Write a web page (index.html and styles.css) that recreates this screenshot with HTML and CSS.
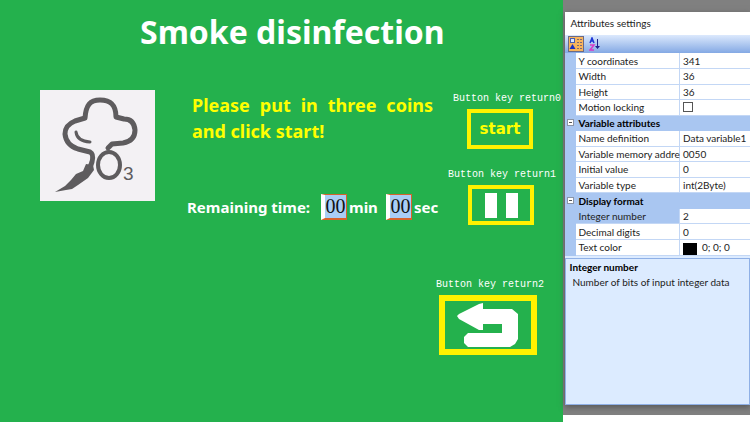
FILE: index.html
```
<!DOCTYPE html>
<html lang="en">
<head>
<meta charset="utf-8">
<title>Smoke disinfection</title>
<link rel="stylesheet" href="styles.css">
</head>
<body>
  <main class="screen">
    <h1>Smoke disinfection</h1>
    <div class="content">
      <svg class="logo" viewBox="0 0 115 111">
        <g fill="none" stroke="#5e5c5e" stroke-linecap="round" stroke-linejoin="round">
          <path stroke-width="5" d="M68 58L72 54L83 53Q95 51 95 40Q94 29 84 29L76 27C76 14 70 10 60 10C50 10 46 15 45 28L35 31Q25 35 25 44Q26 55 38 59L50 62Q54 64 52 72L49 80"/>
          <path stroke-width="3" d="M36 42Q37 51 50 52"/>
          <ellipse cx="69" cy="75" rx="11" ry="13" stroke-width="4"/>
        </g>
        <path fill="#5e5c5e" d="M46 74L53 75L54 80L48 88L38 95L32 99L26 100L15 102L25 96L31 90L36 84L43 81Z"/>
        <text class="logo-digit" x="83" y="90">3</text>
      </svg>
      <div class="messages">
        <p class="hint">Please put in three coins and click start!</p>
        <div class="timer">
          <span>Remaining time:</span>
          <input class="digits" id="minutes" type="text" value="00" readonly>
          <label for="minutes">min</label>
          <input class="digits" id="seconds" type="text" value="00" readonly>
          <label for="seconds">sec</label>
        </div>
      </div>
      <div class="keys">
        <div class="key key-start">
          <span class="key-name" id="key0">Button key return0</span>
          <button type="button" aria-describedby="key0">start</button>
        </div>
        <div class="key key-pause">
          <span class="key-name" id="key1">Button key return1</span>
          <button type="button" aria-label="Pause" aria-describedby="key1">
            <svg width="33" height="25" viewBox="0 0 33 25"><path fill="#fff" d="M0 0H12V25H0ZM21 0H33V25H21Z"/></svg>
          </button>
        </div>
        <div class="key key-back">
          <span class="key-name" id="key2">Button key return2</span>
          <button type="button" aria-label="Back" aria-describedby="key2">
            <svg width="62" height="44" viewBox="0 0 62 44"><path fill="#fff" d="M0 13L2 11L22 1L26 0L26 6L55 6L61 11L61 36L58 41L53 44L11 44L7 40L7 34L11 30L45 30L45 21L26 21L26 27L22 27L2 16Z"/></svg>
          </button>
        </div>
      </div>
    </div>
  </main>

  <aside class="dock">
    <section class="panel">
      <h2>Attributes settings</h2>
      <div class="toolbar">
        <button type="button" class="tool active" aria-label="Categorized">
          <svg width="14" height="14" viewBox="0 0 14 14">
            <rect x="1.500" y="1.500" width="4" height="4" fill="#dfe6fa" stroke="#4a5fb0"/>
            <path fill="#1c2fc0" d="M3.500 7L6.500 12H.5Z"/>
            <path stroke="#7d6a78" stroke-dasharray="2 1" d="M8 2.500H13M8 5.500H13M8 8.500H13M8 11.500H13"/>
          </svg>
        </button>
        <button type="button" class="tool" aria-label="Alphabetical">
          <svg width="12" height="14" viewBox="0 0 12 14">
            <path fill="none" stroke="#1f36d8" stroke-width="1.500" d="M1 6L3 1L5 6M2 4H4"/>
            <path fill="none" stroke="#d63cc8" stroke-width="1.500" d="M1 8H5L1 13H5"/>
            <path fill="#20208c" d="M8 2H9V9H11L8.500 12L6 9H8Z"/>
          </svg>
        </button>
      </div>
      <table>
        <tbody>
          <tr><td class="gutter"></td><th scope="row">Y coordinates</th><td>341</td></tr>
          <tr><td class="gutter"></td><th scope="row">Width</th><td>36</td></tr>
          <tr><td class="gutter"></td><th scope="row">Height</th><td>36</td></tr>
          <tr><td class="gutter"></td><th scope="row"><label for="lock">Motion locking</label></th><td><input id="lock" type="checkbox"></td></tr>
          <tr class="group"><td class="gutter"><button type="button" class="fold" aria-label="Collapse"></button></td><th colspan="2">Variable attributes</th></tr>
          <tr><td class="gutter"></td><th scope="row">Name definition</th><td>Data variable1</td></tr>
          <tr><td class="gutter"></td><th scope="row">Variable memory addre</th><td>0050</td></tr>
          <tr><td class="gutter"></td><th scope="row">Initial value</th><td>0</td></tr>
          <tr><td class="gutter"></td><th scope="row">Variable type</th><td>int(2Byte)</td></tr>
          <tr class="group"><td class="gutter"><button type="button" class="fold" aria-label="Collapse"></button></td><th colspan="2">Display format</th></tr>
          <tr class="selected"><td class="gutter"></td><th scope="row">Integer number</th><td>2</td></tr>
          <tr><td class="gutter"></td><th scope="row">Decimal digits</th><td>0</td></tr>
          <tr><td class="gutter"></td><th scope="row">Text color</th><td><span class="swatch"></span>0; 0; 0</td></tr>
        </tbody>
      </table>
      <div class="help">
        <h3>Integer number</h3>
        <p>Number of bits of input integer data</p>
      </div>
    </section>
  </aside>
</body>
</html>
```
FILE: styles.css
```
* {
  box-sizing: border-box;
}

body {
  margin: 0;
  min-height: 100vh;
  display: grid;
  grid-template-columns: 3fr 1fr;
  background: #fff;
  font-family: "Noto Sans", sans-serif;
}

h1, h2, h3, p {
  margin: 0;
}

button {
  padding: 0;
  font-family: inherit;
  cursor: pointer;
}

svg {
  display: block;
}

/* touch screen */
.screen {
  margin-bottom: 2px;
  padding: 8px 0 0 40px;
  background: #24b14d;
  color: #fff;
}

h1 {
  margin-left: 100px;
  font-size: 32px;
  line-height: 48px;
  white-space: nowrap;
}

.content {
  display: flex;
  align-items: flex-start;
  padding-top: 34px;
}

.logo {
  flex: none;
  width: 115px;
  height: 111px;
  background: #f3f1f4;
}

.logo-digit {
  font-family: "Liberation Sans", sans-serif;
  font-size: 19px;
  fill: #5e5c5e;
}

.messages {
  flex: none;
  width: 249px;
  margin-left: 32px;
}

.hint {
  width: 246px;
  padding: 2px 0 0 5px;
  color: #ff0;
  font-size: 18px;
  font-weight: bold;
  line-height: 26px;
  text-align: justify;
}

.timer {
  display: flex;
  align-items: center;
  margin-top: 50px;
  font-size: 15px;
  font-weight: bold;
  line-height: 26px;
  white-space: nowrap;
}

.timer span {
  flex: 1;
}

.timer label {
  width: 39px;
  padding-left: 2px;
}

.timer label:last-child {
  width: 24px;
}

.digits {
  width: 26px;
  height: 26px;
  padding: 0;
  border: 1px solid #d8622c;
  border-left: 4px solid #fff;
  border-bottom-width: 2px;
  background: #a9cdf5;
  color: #111;
  font-family: "Liberation Serif", serif;
  font-size: 20px;
  text-align: center;
}

.keys {
  display: flex;
  flex-direction: column;
}

.key {
  display: flex;
  flex-direction: column;
  align-items: flex-start;
}

.key-name {
  padding-top: 1px;
  font-family: "Liberation Mono", monospace;
  font-size: 10px;
  line-height: 16px;
  white-space: nowrap;
}

.key button {
  display: flex;
  align-items: center;
  justify-content: center;
  width: 66px;
  height: 40px;
  margin-top: 2px;
  border: 4px solid #fff200;
  background: transparent;
  color: #ff0;
  font-family: "DejaVu Sans", sans-serif;
  font-size: 15px;
  font-weight: bold;
}

.key-start {
  padding-left: 17px;
}

.key-start button {
  margin-left: 14px;
}

.key-pause {
  padding: 17px 0 0 12px;
}

.key-pause button {
  margin-left: 20px;
}

.key-back {
  padding-top: 51px;
}

.key-back button {
  width: 98px;
  height: 60px;
  margin-left: 3px;
  border-width: 6px;
}

/* attributes dock */
.dock {
  margin-bottom: 9px;
  padding: 12px 0 10px 2px;
  background: #808080;
}

.panel {
  display: flex;
  flex-direction: column;
  height: 100%;
  background: #dcebff;
  box-shadow: 0 2px 6px #555;
  color: #222;
  font-family: Lato, sans-serif;
  font-size: 10px;
}

h2 {
  padding: 0 6px;
  background: #fff;
  font-size: 10px;
  font-weight: normal;
  line-height: 23px;
}

.toolbar {
  display: flex;
  gap: 3px;
  padding: 1px 3px;
  background: linear-gradient(#dce9fd, #84a9e4);
}

.tool {
  display: flex;
  align-items: center;
  justify-content: center;
  width: 16px;
  height: 16px;
  border: 0;
  background: none;
}

.tool.active {
  border: 1px solid #6b6a86;
  background: #f9b55c;
}

table {
  width: 100%;
  height: 203px;
  table-layout: fixed;
  border-collapse: collapse;
  background: #fff;
}

th, td {
  height: 15px;
  padding: 0 0 0 3px;
  border-bottom: 1px solid #c3d7f5;
  font-weight: normal;
  line-height: 14px;
  text-align: left;
  white-space: nowrap;
}

th {
  width: 104px;
  border-right: 1px solid #c3d7f5;
}

.gutter {
  width: 11px;
  padding: 0;
  border-color: #a9c6f1;
  background: #a9c6f1;
}

.group th {
  border-color: #a9c6f1;
  background: #a9c6f1;
  color: #000;
  font-weight: bold;
}

.selected th {
  background: #a9c6f1;
}

.fold {
  display: block;
  width: 7px;
  height: 7px;
  margin-left: 2px;
  border: 1px solid #8b95a8;
  background: linear-gradient(#555, #555) center / 3px 1px no-repeat #fff;
}

input[type="checkbox"] {
  display: block;
  appearance: none;
  width: 10px;
  height: 10px;
  margin: 0;
  border: 1px solid #555;
  background: #fff;
}

.swatch {
  display: inline-block;
  width: 14px;
  height: 12px;
  margin-right: 5px;
  background: #000;
  vertical-align: middle;
}

.help {
  flex: 1;
  margin-top: 2px;
  padding: 1px 4px;
  border: 1px solid #8fb0e6;
}

.help h3 {
  color: #000;
  font-size: 10px;
  line-height: 14px;
}

.help p {
  padding-left: 3px;
  line-height: 16px;
}
```
